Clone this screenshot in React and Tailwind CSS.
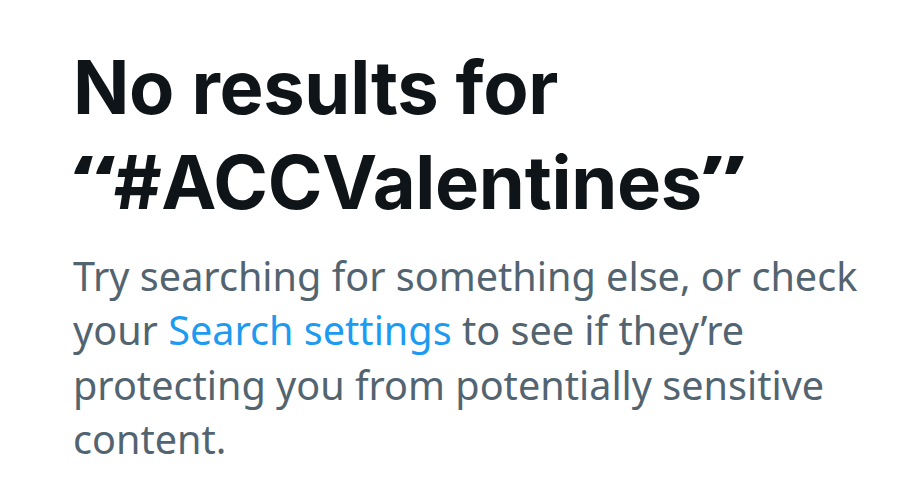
export default function App() {
  return (
    <div className="w-[920px] h-[483px] bg-white overflow-hidden">
      <div className="flex flex-col pl-[73px] pt-[41px] w-[880px]">
        <h1 className="font-['Inter','Noto_Sans',sans-serif] text-[74px] leading-[93px] font-bold text-[#0f1419] tracking-[-0.3px]">
          No results for
          <br />
          <span className="inline-block font-['Noto_Sans',sans-serif] scale-x-[1.3] origin-left mr-[8px]">“</span>#ACCValentines<span className="inline-block font-['Noto_Sans',sans-serif] scale-x-[1.3] origin-left">”</span>
        </h1>
        <p className="mt-[20px] w-[800px] font-['Noto_Sans','Open_Sans',sans-serif] text-[39.6px] leading-[54.3px] text-[#536471]">
          Try searching for something else, or check your{" "}
          <span className="text-[#1d9bf0]">Search settings</span> to see if they’re protecting you from potentially sensitive content.
        </p>
      </div>
    </div>
  );
}
